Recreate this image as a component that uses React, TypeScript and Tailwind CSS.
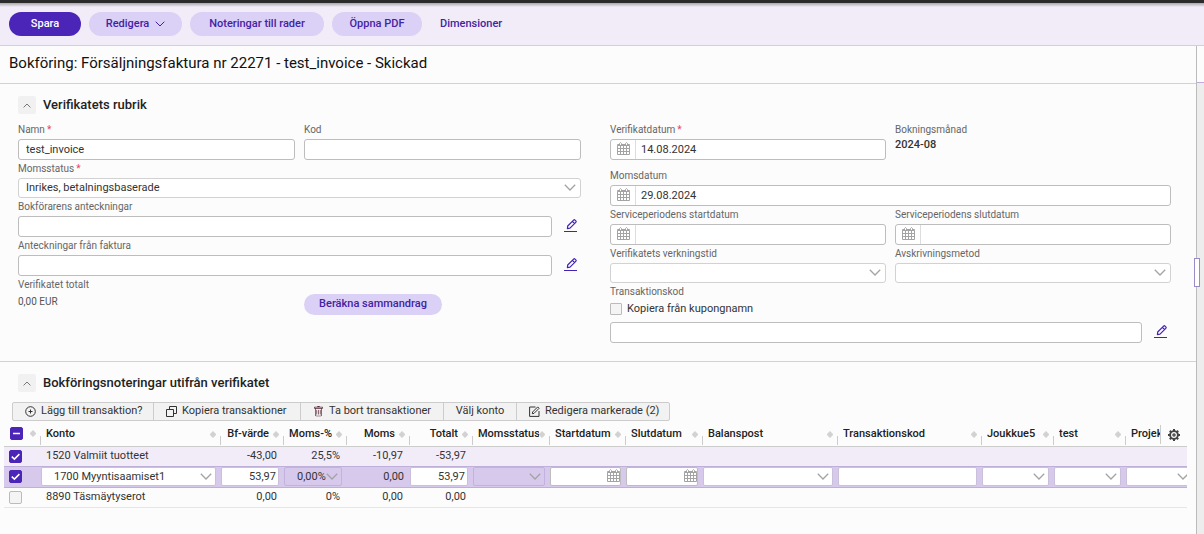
import React from 'react';
import { BsTrash } from 'react-icons/bs';

const fieldClass = 'h-[21px] w-full rounded-[3px] border border-[#bdbdbd] bg-white px-[7px] text-[11px] text-[#333] outline-none';
const pillClass = 'flex h-6 items-center justify-center rounded-full bg-[#dbd0f5] text-[11px] font-medium text-[#4323a3]';
const toolClass = 'flex items-center border-r border-[#ccc] text-[11px] text-[#333] last:border-r-0';

function Chevron({ className = '' }: { className?: string }) {
    return (
        <svg viewBox="0 0 12 7" className={`pointer-events-none h-[7px] w-3 ${className}`} fill="none" stroke="currentColor" strokeWidth="1.3">
            <path d="M.8.8 6 6 11.2.8" />
        </svg>
    )
}

function CalendarIcon({ className = '' }: { className?: string }) {
    return (
        <svg viewBox="0 0 13 13" className={`pointer-events-none h-[13px] w-[13px] text-[#a3a3a3] ${className}`} fill="none" stroke="currentColor">
            <path d="M.5 3.5h12v9H.5zM.5 6.5h12M.5 9.5h12M3.5 4v8.5M6.5 4v8.5M9.5 4v8.5" />
            <path d="M.5 3.5v-1h2M2.5 3.5v-2l1-1 1 1v2M8.5 3.5v-2l1-1 1 1v2M5 2.5h3M10.5 2.5h2v1" />
        </svg>
    )
}

function PencilIcon() {
    return (
        <svg viewBox="0 0 13 13" className="h-[13px] w-[13px]" fill="none" stroke="currentColor" strokeLinejoin="round">
            <path d="M3.4 9.7 3.7 7 9.6 1.1a1 1 0 0 1 1.4 0l.8.8a1 1 0 0 1 0 1.4L6 9.2ZM8.4 2.4l2.1 2.1" strokeWidth="1.2" />
            <path d="M0 12.5h13" />
        </svg>
    )
}

function GearIcon() {
    return (
        <svg viewBox="0 0 12 12" className="h-3 w-3" fill="none" stroke="#444">
            <circle cx="6" cy="6" r="3.9" strokeWidth="1.9" />
            <path d="M6 0v2M6 10v2M0 6h2M10 6h2M1.8 1.8l1.4 1.4M8.8 8.8l1.4 1.4M1.8 10.2l1.4-1.4M8.8 3.2l1.4-1.4" strokeWidth="2" />
            <circle cx="6" cy="6" r="1.1" strokeWidth="1.3" />
        </svg>
    )
}

function SortIcon() {
    return (
        <svg viewBox="0 0 6 7" className="h-[7px] w-[6px] shrink-0" fill="#d2d2d2">
            <path d="M3 0 6 3H0ZM0 4h6L3 7Z" />
            <path d="M0 3h6v1H0Z" />
        </svg>
    )
}

type LabelProps = { id?: string; required?: boolean; children: React.ReactNode }

function Label({ id, required, children }: LabelProps) {
    return (
        <label htmlFor={id} className="block h-[18px] whitespace-nowrap text-[10px] leading-[17px] text-[#666]">
            {children}{required && <span className="ml-[2px] text-[#e8455a]">*</span>}
        </label>
    )
}

type FieldProps = { id: string; label: string; required?: boolean; value?: string; className?: string }

function TextField({ id, label, required, value = '' }: FieldProps) {
    return (
        <div>
            <Label id={id} required={required}>{label}</Label>
            <input id={id} type="text" defaultValue={value} className={`block ${fieldClass}`} />
        </div>
    )
}

function DateField({ id, label, required, value = '', className = '' }: FieldProps) {
    return (
        <div className={className}>
            <Label id={id} required={required}>{label}</Label>
            <div className="flex h-[21px] overflow-hidden rounded-[3px] border border-[#bdbdbd] bg-white">
                <span className="flex w-[25px] shrink-0 justify-center border-r border-[#ddd] pt-[2px]">
                    <CalendarIcon />
                </span>
                <input id={id} type="text" defaultValue={value} className="w-full min-w-0 px-[5px] pt-px text-[11px] text-[#333] outline-none" />
            </div>
        </div>
    )
}

function SelectField({ id, label, required, value = '', className = '' }: FieldProps) {
    return (
        <div className={className}>
            <Label id={id} required={required}>{label}</Label>
            <div className="relative">
                <select id={id} className="block h-5 w-full appearance-none rounded-[3px] border border-[#d2d2d2] bg-white px-[7px] text-[11px] text-[#333]">
                    <option>{value}</option>
                </select>
                <Chevron className="absolute top-[6px] right-[5px] text-[#a3a3a3]" />
            </div>
        </div>
    )
}

function NoteField({ id, label }: { id: string; label?: string }) {
    return (
        <div className="col-span-2">
            {label && <Label id={id}>{label}</Label>}
            <div className="flex">
                <input id={id} type="text" aria-label={label ? undefined : 'Transaktionskod'} className={fieldClass} />
                <button aria-label="Redigera" className="ml-3 flex w-[17px] shrink-0 items-start pt-[3px] text-[#4323b5]">
                    <PencilIcon />
                </button>
            </div>
        </div>
    )
}

function SectionTitle({ children }: { children: string }) {
    return (
        <div className="flex items-center gap-[7px] px-[18px]">
            <button aria-label={children} className="flex h-[18px] w-[18px] items-center justify-center rounded-[2px] bg-[#f1f1f1] text-[#777]">
                <svg viewBox="0 0 8 5" className="h-[5px] w-2" fill="none" stroke="currentColor"><path d="M.6 4.4 4 1l3.4 3.4" /></svg>
            </button>
            <h2 className="text-[13px] leading-[18px] font-medium text-[#222]">{children}</h2>
        </div>
    )
}

function Check({ checked, mixed }: { checked?: boolean; mixed?: boolean }) {
    return (
        <span className="relative block h-[13px] w-[13px]">
            <input
                type="checkbox"
                aria-label="Välj rad"
                defaultChecked={checked || mixed}
                className="block h-[13px] w-[13px] appearance-none rounded-[2px] border border-[#bbb] bg-[#f4f4f4] checked:border-[#4a25b8] checked:bg-[#4a25b8]"
            />
            {(checked || mixed) && (
                <svg viewBox="0 0 13 13" className="pointer-events-none absolute inset-0" fill="none" stroke="#fff" strokeWidth="1.5">
                    <path d={mixed ? 'M3 6.5h7' : 'm2.8 6.6 2.6 2.5 5-5'} />
                </svg>
            )}
        </span>
    )
}

type Kind = 'select' | 'input' | 'date' | 'lockedSelect' | 'text'
type Column = { name: string; width: string; right?: boolean; kind: Kind; values: [string, string, string] }

const columns: Column[] = [
    { name: 'Konto', width: 'w-[180px]', kind: 'select', values: ['1520 Valmiit tuotteet', '1700 Myyntisaamiset1', '8890 Täsmäytyserot'] },
    { name: 'Bf-värde', width: 'w-[63px]', right: true, kind: 'input', values: ['-43,00', '53,97', '0,00'] },
    { name: 'Moms-%', width: 'w-[63px]', right: true, kind: 'lockedSelect', values: ['25,5%', '0,00%', '0%'] },
    { name: 'Moms', width: 'w-[63px]', right: true, kind: 'text', values: ['-10,97', '0,00', '0,00'] },
    { name: 'Totalt', width: 'w-[63px]', right: true, kind: 'input', values: ['-53,97', '53,97', '0,00'] },
    { name: 'Momsstatus', width: 'w-[77px]', kind: 'lockedSelect', values: ['', '', ''] },
    { name: 'Startdatum', width: 'w-[76px]', kind: 'date', values: ['', '', ''] },
    { name: 'Slutdatum', width: 'w-[77px]', kind: 'date', values: ['', '', ''] },
    { name: 'Balanspost', width: 'w-[135px]', kind: 'select', values: ['', '', ''] },
    { name: 'Transaktionskod', width: 'w-[144px]', kind: 'input', values: ['', '', ''] },
    { name: 'Joukkue5', width: 'w-[72px]', kind: 'select', values: ['', '', ''] },
    { name: 'test', width: 'w-[72px]', kind: 'select', values: ['', '', ''] },
    { name: 'Projekt', width: '', kind: 'select', values: ['', '', ''] },
]

function EditCell({ column }: { column: Column }) {
    const value = column.values[1]
    const box = 'block h-[19px] w-full rounded-[2px] border text-[11px] text-[#333]'
    // the last column runs out under the edge of the table
    const frame = column.name === 'Projekt' ? 'relative w-[67px]' : 'relative mr-1'

    if (column.kind === 'text') return <span className="block pr-[5px] text-right">{value}</span>
    if (column.kind === 'input') {
        return (
            <div className={frame}>
                <input aria-label={column.name} defaultValue={value} className={`${box} border-[#c9c0dc] bg-white px-[2px] ${column.right ? 'text-right' : ''}`} />
            </div>
        )
    }
    if (column.kind === 'date') {
        return (
            <div className={frame}>
                <input aria-label={column.name} defaultValue={value} className={`${box} border-[#bdbdbd] bg-white px-1`} />
                <CalendarIcon className="absolute top-[2px] right-px" />
            </div>
        )
    }
    const locked = column.kind === 'lockedSelect'
    return (
        <div className={frame}>
            <select
                aria-label={column.name}
                disabled={locked}
                className={`${box} appearance-none pl-3 opacity-100 ${locked ? 'border-[#c1b3dc] bg-[#d6c9ec]' : 'border-[#c9c0dc] bg-white'}`}
            >
                <option>{value}</option>
            </select>
            <Chevron className="absolute top-[6px] right-1 text-[#a3a3a3]" />
        </div>
    )
}

function TransactionTable() {
    return (
        <div className="relative ml-1 mr-[9px] overflow-hidden">
            <table className="w-full table-fixed border-collapse text-[11px] leading-4 text-[#333]">
                <thead>
                    <tr className="h-[25px] border-b border-[#ccc]">
                        <th className="w-9 p-0">
                            <div className="flex items-center justify-between pr-1 pl-[6px]"><Check mixed /><SortIcon /></div>
                        </th>
                        {columns.map((column) => (
                            <th key={column.name} className={`p-0 font-medium text-[#222] ${column.width}`}>
                                <div className="flex h-6 items-end">
                                    <span className="h-[9px] w-px shrink-0 bg-[#ccc]" />
                                    <div className="flex h-6 min-w-0 flex-1 items-center pt-[2px] pr-1 pl-[5px]">
                                        <span className={`min-w-0 flex-1 overflow-hidden whitespace-nowrap ${column.right ? 'pr-1 text-right' : 'text-left'}`}>{column.name}</span>
                                        <SortIcon />
                                    </div>
                                </div>
                            </th>
                        ))}
                    </tr>
                </thead>
                <tbody>
                    <tr className="h-5 bg-[#f2ecf8]">
                        <td className="py-0 pr-0 pl-[5px]"><Check checked /></td>
                        {columns.map((column) => (
                            <td key={column.name} className={`px-[6px] py-0 ${column.right ? 'text-right' : ''}`}>{column.values[0]}</td>
                        ))}
                    </tr>
                    <tr className="h-[21px] border-y border-[#bfb0da] bg-[#d6c9ec]">
                        <td className="py-0 pr-0 pl-[5px]"><Check checked /></td>
                        {columns.map((column) => (
                            <td key={column.name} className="overflow-hidden py-0 pr-0 pl-px"><EditCell column={column} /></td>
                        ))}
                    </tr>
                    <tr className="h-5 border-b border-[#e6e6e6]">
                        <td className="py-0 pr-0 pl-[5px]"><Check /></td>
                        {columns.map((column) => (
                            <td key={column.name} className={`px-[6px] py-0 ${column.right ? 'text-right' : ''}`}>{column.values[2]}</td>
                        ))}
                    </tr>
                </tbody>
            </table>
            <button aria-label="Inställningar" className="absolute top-1 right-0 flex h-[19px] w-[27px] items-center justify-center border-l border-[#ccc] bg-[#fcfcfc]">
                <GearIcon />
            </button>
        </div>
    )
}

function App() {
    return (
        <div className="flex min-h-screen flex-col bg-[#fcfcfc] font-[Roboto,sans-serif] text-[#333]">
            <div className="h-[3px] bg-[#2b2b2b]" />
            <div className="h-1 bg-linear-to-b from-[#aaa8ae] to-[#f2ecf8]" />
            <header className="flex h-[39px] items-start gap-2 border-b border-[#d2d2d2] bg-[#f2ecf8] px-[9px] pt-[5px]">
                <button className="h-6 w-[72px] rounded-full bg-[#4a25b8] text-[11px] font-medium text-white">Spara</button>
                <button className={`${pillClass} w-[93px] gap-[6px]`}>
                    Redigera
                    <svg viewBox="0 0 10 6" className="h-[6px] w-[10px]" fill="none" stroke="currentColor"><path d="M.7.7 5 5 9.3.7" /></svg>
                </button>
                <button className={`${pillClass} w-[134px]`}>Noteringar till rader</button>
                <button className={`${pillClass} w-[90px]`}>Öppna PDF</button>
                <button className="h-6 px-[10px] text-[11px] font-medium text-[#4323a3]">Dimensioner</button>
            </header>

            <div className="flex flex-1">
                <main className="min-w-0 flex-1">
                    <h1 className="h-[38px] border-b border-[#d2d2d2] px-[9px] pt-[6px] text-[15px] leading-[22px] font-normal text-[#111]">
                        Bokföring: Försäljningsfaktura nr 22271 - test_invoice - Skickad
                    </h1>

                    <section className="border-b border-[#d2d2d2] pt-3 pb-[18px]">
                        <SectionTitle>Verifikatets rubrik</SectionTitle>
                        <div className="mt-[7px] grid grid-cols-[563fr_561fr] gap-x-[29px] pr-[25px] pl-[18px]">
                            <div className="grid grid-cols-2 content-start gap-x-[9px]">
                                <TextField id="namn" label="Namn" required value="test_invoice" />
                                <TextField id="kod" label="Kod" />
                                <SelectField id="momsstatus" label="Momsstatus" required value="Inrikes, betalningsbaserade" className="col-span-2" />
                                <NoteField id="anteckningar" label="Bokförarens anteckningar" />
                                <NoteField id="faktura" label="Anteckningar från faktura" />
                                <div>
                                    <div className="h-[18px] text-[10px] leading-[17px] text-[#666]">Verifikatet totalt</div>
                                    <div className="text-[10px] leading-4 text-[#555]">0,00 EUR</div>
                                </div>
                                <div className="pt-[18px]">
                                    <button className="block h-[21px] w-[138px] rounded-full bg-[#dbd0f5] text-[11px] font-medium text-[#4323a3]">Beräkna sammandrag</button>
                                </div>
                            </div>

                            <div className="grid grid-cols-2 content-start gap-x-[9px]">
                                <DateField id="verifikatdatum" label="Verifikatdatum" required value="14.08.2024" />
                                <div>
                                    <div className="h-4 text-[10px] leading-[17px] text-[#666]">Bokningsmånad</div>
                                    <div className="text-[11px] leading-4 font-medium">2024-08</div>
                                </div>
                                <DateField id="momsdatum" label="Momsdatum" value="29.08.2024" className="col-span-2 pt-[7px]" />
                                <DateField id="startdatum" label="Serviceperiodens startdatum" />
                                <DateField id="slutdatum" label="Serviceperiodens slutdatum" />
                                <SelectField id="verkningstid" label="Verifikatets verkningstid" />
                                <SelectField id="avskrivning" label="Avskrivningsmetod" />
                                <div className="col-span-2 h-[18px] text-[10px] leading-[17px] text-[#666]">Transaktionskod</div>
                                <label className="col-span-2 flex h-[21px] items-start gap-[5px] text-[11px] leading-4">
                                    <input type="checkbox" className="mt-[2px] h-3 w-3 appearance-none rounded-[1px] border border-[#bbb] bg-[#f4f4f4]" />
                                    Kopiera från kupongnamn
                                </label>
                                <NoteField id="transaktionskod" />
                            </div>
                        </div>
                    </section>

                    <section className="pt-3">
                        <SectionTitle>Bokföringsnoteringar utifrån verifikatet</SectionTitle>
                        <div className="mt-[10px] ml-3 flex h-[19px] w-fit rounded-[2px] border border-[#ccc] bg-[#f2f2f2]">
                            <button className={`${toolClass} w-[141px] gap-[5px] pl-3`}>
                                <svg viewBox="0 0 11 11" className="h-[11px] w-[11px]" fill="none" stroke="currentColor">
                                    <circle cx="5.5" cy="5.5" r="4.8" />
                                    <path d="M3.5 5.5h4M5.5 3.5v4" />
                                </svg>
                                Lägg till transaktion?
                            </button>
                            <button className={`${toolClass} w-[147px] gap-[5px] pl-3`}>
                                <svg viewBox="0 0 11 11" className="h-[11px] w-[11px]" fill="none" stroke="currentColor"><path d="M.5 3.5h7v7h-7zM3.5 3V.5h7v7H8" /></svg>
                                Kopiera transaktioner
                            </button>
                            <button className={`${toolClass} w-[143px] gap-[5px] pl-3`}>
                                <BsTrash className="h-[11px] w-[11px] text-[#5a2a3a]" />
                                Ta bort transaktioner
                            </button>
                            <button className={`${toolClass} w-[73px] justify-center`}>Välj konto</button>
                            <button className={`${toolClass} w-[152px] gap-[5px] pl-3`}>
                                <svg viewBox="0 0 11 11" className="h-[11px] w-[11px]" fill="none" stroke="currentColor">
                                    <path d="M6.5 1H.6v9.4H10V5" />
                                    <path d="M3.3 7.7 3.6 6 8.7.9l1.4 1.4L5 7.4Z" />
                                </svg>
                                Redigera markerade (2)
                            </button>
                        </div>
                        <TransactionTable />
                    </section>
                </main>

                <aside className="relative flex w-2 flex-col border-l border-[#bbb] bg-[#ededed]">
                    <div className="h-[37px] border-b border-[#c0aadd] bg-[#fcfcfc]" />
                    <div className="absolute top-[212px] -left-[3px] h-[29px] w-[6px] border border-[#9a8ac8] bg-white" />
                </aside>
            </div>
        </div>
    )
}

export default App
